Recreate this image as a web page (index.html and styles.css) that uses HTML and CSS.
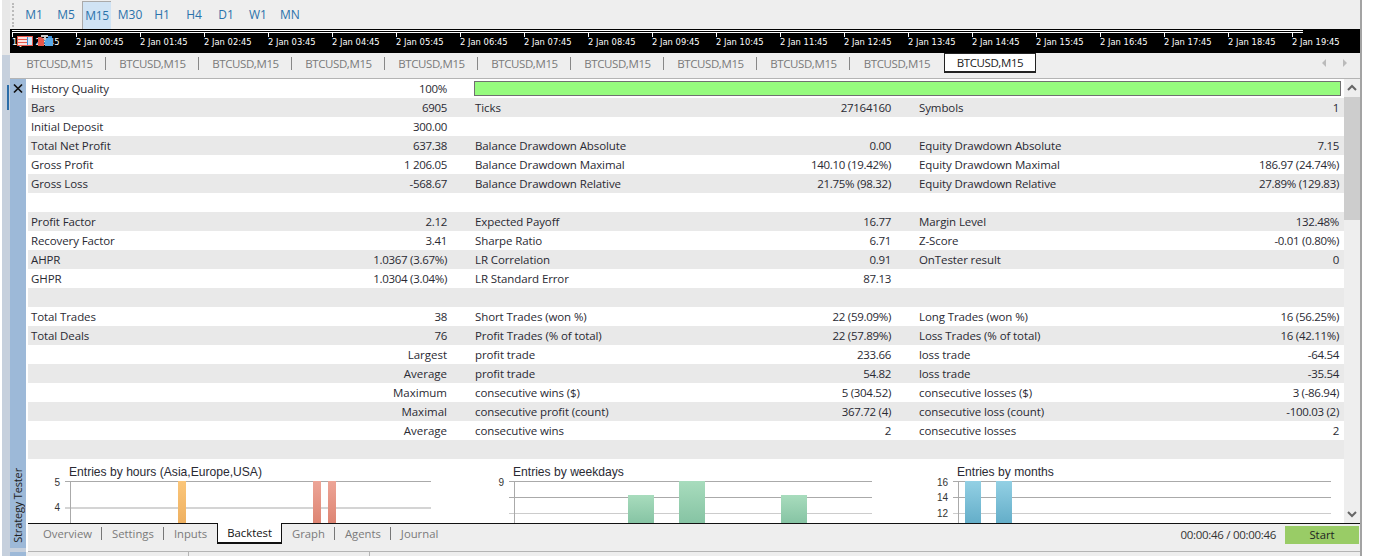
FILE: index.html
```html
<!DOCTYPE html>
<html lang="en">
<head>
    <meta charset="UTF-8">
    <title>Strategy Tester</title>
    <link rel="stylesheet" href="styles.css">
</head>
<body>
<div class="window">
    <div class="toolbar">
        <span class="grip"></span>
        <span class="period">M1</span>
        <span class="period">M5</span>
        <span class="period selected">M15</span>
        <span class="period">M30</span>
        <span class="period">H1</span>
        <span class="period">H4</span>
        <span class="period">D1</span>
        <span class="period">W1</span>
        <span class="period">MN</span>
    </div>

    <div class="time-scale">
        <div class="scale-lines"></div>
        <div class="scale-labels">
            <span class="first">1 Jan 23:45</span>
            <span>2 Jan 00:45</span><span>2 Jan 01:45</span><span>2 Jan 02:45</span><span>2 Jan 03:45</span>
            <span>2 Jan 04:45</span><span>2 Jan 05:45</span><span>2 Jan 06:45</span><span>2 Jan 07:45</span>
            <span>2 Jan 08:45</span><span>2 Jan 09:45</span><span>2 Jan 10:45</span><span>2 Jan 11:45</span>
            <span>2 Jan 12:45</span><span>2 Jan 13:45</span><span>2 Jan 14:45</span><span>2 Jan 15:45</span>
            <span>2 Jan 16:45</span><span>2 Jan 17:45</span><span>2 Jan 18:45</span><span>2 Jan 19:45</span>
        </div>
        <svg class="trade-icons" width="38" height="12" viewBox="0 0 38 12">
            <rect x="0.5" y="1.500" width="15" height="9" fill="#fff" stroke="#e8584c"/>
            <path d="M1 4.500h9M1 7.500h9" stroke="#e8584c" fill="none"/>
            <path d="M1 3h9M1 6h9M1 9h9" stroke="#f7c3bd" fill="none"/>
            <path d="M10.500 2v8" stroke="#3a8fd8"/>
            <path d="M11 2h4v8h-4z" fill="#cfe6f8"/>
            <path d="M0 1h10v1H0zM10 1h6v1h-6z" fill="#e8584c"/>
            <path d="M21 2l3 0 3 2v7h-6z" fill="#e8584c"/>
            <path d="M28 3h8v8h-8z" fill="#5aaae8"/>
            <path d="M31 1h4v2h-4z" fill="#3a8fd8"/>
            <path d="M24 0h7v2h-2v3h-2V2h-3z" fill="#c9c9c9"/>
        </svg>
    </div>

    <div class="doc-tabs">
        <span class="doc-tab">BTCUSD,M15</span>
        <span class="doc-tab">BTCUSD,M15</span>
        <span class="doc-tab">BTCUSD,M15</span>
        <span class="doc-tab">BTCUSD,M15</span>
        <span class="doc-tab">BTCUSD,M15</span>
        <span class="doc-tab">BTCUSD,M15</span>
        <span class="doc-tab">BTCUSD,M15</span>
        <span class="doc-tab">BTCUSD,M15</span>
        <span class="doc-tab">BTCUSD,M15</span>
        <span class="doc-tab last">BTCUSD,M15</span>
        <span class="doc-tab active">BTCUSD,M15</span>
        <span class="doc-arrows">
            <svg width="6" height="8" viewBox="0 0 6 8"><path d="M5 0v8L1 4z" fill="#bbb"/></svg>
            <svg width="6" height="8" viewBox="0 0 6 8"><path d="M1 0v8l4-4z" fill="#bbb"/></svg>
        </span>
    </div>

    <div class="tester">
        <div class="side">
            <svg class="close" width="16" height="19" viewBox="0 0 16 19"><path d="M4 5.500l8 8M12 5.500l-8 8" stroke="#111" stroke-width="1.700" fill="none"/></svg>
            <span class="side-title">Strategy Tester</span>
        </div>
        <div class="tester-main">
            <div class="report-area">
                <div class="report">
                    <div class="row"><div class="cell"><span>History Quality</span><span>100%</span></div><div class="bar-cell"><div class="quality-bar"></div></div></div>
                    <div class="row"><div class="cell"><span>Bars</span><span>6905</span></div><div class="cell"><span>Ticks</span><span>27164160</span></div><div class="cell"><span>Symbols</span><span>1</span></div></div>
                    <div class="row"><div class="cell"><span>Initial Deposit</span><span>300.00</span></div><div class="cell"></div><div class="cell"></div></div>
                    <div class="row"><div class="cell"><span>Total Net Profit</span><span>637.38</span></div><div class="cell"><span>Balance Drawdown Absolute</span><span>0.00</span></div><div class="cell"><span>Equity Drawdown Absolute</span><span>7.15</span></div></div>
                    <div class="row"><div class="cell"><span>Gross Profit</span><span>1 206.05</span></div><div class="cell"><span>Balance Drawdown Maximal</span><span>140.10 (19.42%)</span></div><div class="cell"><span>Equity Drawdown Maximal</span><span>186.97 (24.74%)</span></div></div>
                    <div class="row"><div class="cell"><span>Gross Loss</span><span>-568.67</span></div><div class="cell"><span>Balance Drawdown Relative</span><span>21.75% (98.32)</span></div><div class="cell"><span>Equity Drawdown Relative</span><span>27.89% (129.83)</span></div></div>
                    <div class="row"></div>
                    <div class="row"><div class="cell"><span>Profit Factor</span><span>2.12</span></div><div class="cell"><span>Expected Payoff</span><span>16.77</span></div><div class="cell"><span>Margin Level</span><span>132.48%</span></div></div>
                    <div class="row"><div class="cell"><span>Recovery Factor</span><span>3.41</span></div><div class="cell"><span>Sharpe Ratio</span><span>6.71</span></div><div class="cell"><span>Z-Score</span><span>-0.01 (0.80%)</span></div></div>
                    <div class="row"><div class="cell"><span>AHPR</span><span>1.0367 (3.67%)</span></div><div class="cell"><span>LR Correlation</span><span>0.91</span></div><div class="cell"><span>OnTester result</span><span>0</span></div></div>
                    <div class="row"><div class="cell"><span>GHPR</span><span>1.0304 (3.04%)</span></div><div class="cell"><span>LR Standard Error</span><span>87.13</span></div><div class="cell"></div></div>
                    <div class="row"></div>
                    <div class="row"><div class="cell"><span>Total Trades</span><span>38</span></div><div class="cell"><span>Short Trades (won %)</span><span>22 (59.09%)</span></div><div class="cell"><span>Long Trades (won %)</span><span>16 (56.25%)</span></div></div>
                    <div class="row"><div class="cell"><span>Total Deals</span><span>76</span></div><div class="cell"><span>Profit Trades (% of total)</span><span>22 (57.89%)</span></div><div class="cell"><span>Loss Trades (% of total)</span><span>16 (42.11%)</span></div></div>
                    <div class="row"><div class="cell"><span></span><span>Largest</span></div><div class="cell"><span>profit trade</span><span>233.66</span></div><div class="cell"><span>loss trade</span><span>-64.54</span></div></div>
                    <div class="row"><div class="cell"><span></span><span>Average</span></div><div class="cell"><span>profit trade</span><span>54.82</span></div><div class="cell"><span>loss trade</span><span>-35.54</span></div></div>
                    <div class="row"><div class="cell"><span></span><span>Maximum</span></div><div class="cell"><span>consecutive wins ($)</span><span>5 (304.52)</span></div><div class="cell"><span>consecutive losses ($)</span><span>3 (-86.94)</span></div></div>
                    <div class="row"><div class="cell"><span></span><span>Maximal</span></div><div class="cell"><span>consecutive profit (count)</span><span>367.72 (4)</span></div><div class="cell"><span>consecutive loss (count)</span><span>-100.03 (2)</span></div></div>
                    <div class="row"><div class="cell"><span></span><span>Average</span></div><div class="cell"><span>consecutive wins</span><span>2</span></div><div class="cell"><span>consecutive losses</span><span>2</span></div></div>
                    <div class="row"></div>

                    <div class="charts">
                        <div class="chart">
                            <div class="chart-title">Entries by hours (Asia,Europe,USA)</div>
                            <svg class="plot" width="444" height="46" viewBox="0 0 444 46">
                                <defs>
                                    <linearGradient id="orange" x1="0" y1="0" x2="0" y2="1"><stop offset="0" stop-color="#fbc67a"/><stop offset="1" stop-color="#eeb060"/></linearGradient>
                                    <linearGradient id="red" x1="0" y1="0" x2="0" y2="1"><stop offset="0" stop-color="#eda597"/><stop offset="1" stop-color="#dd8472"/></linearGradient>
                                    <linearGradient id="green" x1="0" y1="0" x2="0" y2="1"><stop offset="0" stop-color="#a8dcbd"/><stop offset="1" stop-color="#85c3a3"/></linearGradient>
                                    <linearGradient id="blue" x1="0" y1="0" x2="0" y2="1"><stop offset="0" stop-color="#93d0e4"/><stop offset="1" stop-color="#63adc8"/></linearGradient>
                                </defs>
                                <path d="M37 3.500h366" stroke="#aaa" fill="none"/>
                                <path d="M37 30h366" stroke="#d4d4d4" stroke-width="2" fill="none"/>
                                <path d="M42.500 3v43" stroke="#aaa" fill="none"/>
                                <rect x="150" y="3" width="8" height="43" fill="url(#orange)"/>
                                <rect x="285" y="3" width="8" height="43" fill="url(#red)"/>
                                <rect x="300" y="3" width="8" height="43" fill="url(#red)"/>
                                <text class="tick" x="32" y="8" text-anchor="end">5</text>
                                <text class="tick" x="32" y="33" text-anchor="end">4</text>
                            </svg>
                        </div>
                        <div class="chart">
                            <div class="chart-title">Entries by weekdays</div>
                            <svg class="plot" width="444" height="46" viewBox="0 0 444 46">
                                <path d="M37 3.500h363M37 19.500h363" stroke="#aaa" fill="none"/>
                                <path d="M37 35.500h363" stroke="#ccc" fill="none"/>
                                <path d="M42.500 3v43" stroke="#aaa" fill="none"/>
                                <rect x="156" y="17" width="26" height="29" fill="url(#green)"/>
                                <rect x="207" y="3" width="26" height="43" fill="url(#green)"/>
                                <rect x="309" y="17" width="26" height="29" fill="url(#green)"/>
                                <text class="tick" x="32" y="8" text-anchor="end">9</text>
                            </svg>
                        </div>
                        <div class="chart">
                            <div class="chart-title">Entries by months</div>
                            <svg class="plot" width="428" height="46" viewBox="0 0 428 46">
                                <path d="M37 3.500h378M37 19.500h378" stroke="#aaa" fill="none"/>
                                <path d="M37 35.500h378" stroke="#ccc" fill="none"/>
                                <path d="M42.500 3v43" stroke="#aaa" fill="none"/>
                                <rect x="49" y="3" width="16" height="43" fill="url(#blue)"/>
                                <rect x="80" y="3" width="16" height="43" fill="url(#blue)"/>
                                <text class="tick" x="32" y="8" text-anchor="end">16</text>
                                <text class="tick" x="32" y="23" text-anchor="end">14</text>
                                <text class="tick" x="32" y="39" text-anchor="end">12</text>
                            </svg>
                        </div>
                    </div>
                </div>
                <div class="scrollbar">
                    <svg class="scroll-btn" width="16" height="18" viewBox="0 0 16 18"><path d="M4 11l4-4 4 4" fill="none" stroke="#666" stroke-width="2"/></svg>
                    <div class="scroll-thumb"></div>
                    <div class="scroll-rest"></div>
                    <svg class="scroll-btn" width="16" height="18" viewBox="0 0 16 18"><path d="M4 7l4 4 4-4" fill="none" stroke="#666" stroke-width="2"/></svg>
                </div>
            </div>

            <div class="tabs">
                <span class="tab">Overview</span>
                <span class="tab">Settings</span>
                <span class="tab no-sep">Inputs</span>
                <span class="tab active">Backtest</span>
                <span class="tab">Graph</span>
                <span class="tab">Agents</span>
                <span class="tab no-sep">Journal</span>
                <span class="elapsed">00:00:46 / 00:00:46</span>
                <span class="start">Start</span>
            </div>
        </div>
    </div>

    <div class="stub">
        <span class="stub-side"></span>
        <span class="stub-col first"></span>
        <span class="stub-col"></span>
    </div>
</div>
</body>
</html>
```

FILE: styles.css
```css
html, body {
    margin: 0;
    padding: 0;
    height: 556px;
    overflow: hidden;
    background: #fff;
}

body {
    padding-left: 2px;
    font-family: 'Open Sans', 'Noto Sans', sans-serif;
    font-size: 11.5px;
    color: #2a2a33;
}

.window {
    box-sizing: border-box;
    width: 1360px;
    height: 556px;
    padding-left: 8px;
    background: linear-gradient(#e8e8e8 55px, #c6d0dd 55px);
    border-right: 2px solid #a3a3a3;
    display: flex;
    flex-direction: column;
}

/* period toolbar */
.toolbar {
    height: 29px;
    box-sizing: border-box;
    padding-top: 1px;
    background: #eee;
    display: flex;
    align-items: stretch;
}

.grip {
    width: 4px;
    margin: 2px 0 2px 2px;
    border-left: 2px dotted #bbb;
}

.period {
    width: 32px;
    text-align: center;
    line-height: 27px;
    font-size: 12px;
    color: #2b72ab;
}

.period.selected {
    box-sizing: border-box;
    background: #d0e3f4;
    border-left: 1px solid #aaa;
    border-top: 1px solid #aaa;
    width: 29px;
    margin-right: 3px;
    letter-spacing: -0.3px;
}

/* black time scale */
.time-scale {
    height: 24px;
    background: #000;
    position: relative;
    color: #fff;
    overflow: hidden;
}

.scale-lines {
    height: 1px;
    margin: 1px 57px 0 2px;
    border-top: 1px solid #fff;
    border-bottom: 1px solid #fff;
}

.scale-labels {
    display: flex;
    padding-left: 2px;
    font-family: 'DejaVu Sans', sans-serif;
    font-size: 8.4px;
    line-height: 11px;
}

.scale-labels span {
    width: 64px;
    flex: none;
    box-sizing: border-box;
    padding-top: 4px;
    background: linear-gradient(#fff, #fff) left top / 1px 4px no-repeat;
    white-space: nowrap;
}

.trade-icons {
    position: absolute;
    left: 7px;
    top: 6px;
}

/* chart tabs */
.doc-tabs {
    height: 26px;
    box-sizing: border-box;
    padding-left: 3px;
    background: #eee;
    border-bottom: 1px solid #b4b4b4;
    display: flex;
    align-items: flex-start;
    font-size: 11.5px;
    letter-spacing: -0.4px;
    color: #7a7a7a;
}

.doc-tab {
    box-sizing: border-box;
    width: 93px;
    height: 19px;
    line-height: 19px;
    margin-top: 1px;
    text-align: center;
    position: relative;
}

.doc-tab::after {
    content: "";
    position: absolute;
    right: 0;
    top: 3px;
    height: 13px;
    border-right: 1px solid #888;
}

.doc-tab.last {
    width: 94px;
}

.doc-tab.last::after {
    display: none;
}

.doc-tab.active {
    width: 92px;
    height: 20px;
    margin-top: 0;
    background: #fff;
    color: #222;
    border: 1px solid #222;
    border-bottom-width: 2px;
    line-height: 17px;
}

.doc-tab.active::after {
    display: none;
}

.doc-arrows {
    margin-left: auto;
    margin-right: 12px;
    display: flex;
    gap: 15px;
    padding-top: 6px;
}

/* tester panel */
.tester {
    flex: none;
    height: 473px;
    display: flex;
}

.side {
    width: 16px;
    background: #9db9d8;
    margin-bottom: 4px;
    display: flex;
    flex-direction: column;
    align-items: center;
    justify-content: space-between;
    position: relative;
}

.side::before {
    content: "";
    position: absolute;
    left: -3px;
    top: 6px;
    width: 2px;
    height: 25px;
    background: #2a6ca8;
}

.close {
    display: block;
}

.side-title {
    writing-mode: vertical-rl;
    transform: rotate(180deg);
    font-size: 11px;
    letter-spacing: -0.15px;
    line-height: 16px;
    padding-top: 5px;
    color: #222;
}

.tester-main {
    width: 1334px;
    padding-left: 2px;
    background: #fff;
    display: flex;
    flex-direction: column;
}

.report-area {
    height: 444px;
    display: flex;
    background: #fff;
    overflow: hidden;
}

.report {
    width: 1316px;
}

.row {
    height: 19px;
    display: grid;
    grid-template-columns: 444px 444px 428px;
    line-height: 19px;
}

.row:nth-child(even) {
    background: #e9e9e9;
}

.cell {
    display: flex;
    justify-content: space-between;
    padding: 0 25px 0 3px;
    white-space: nowrap;
}

.cell:nth-child(3) {
    padding-right: 5px;
}

.cell span:first-child {
    letter-spacing: -0.1px;
}

.cell span:last-child {
    letter-spacing: -0.3px;
}

.cell span:empty + span {
    letter-spacing: 0;
}

.bar-cell {
    grid-column: 2 / 4;
    padding: 2px 3px 2px 2px;
}

.quality-bar {
    height: 13px;
    background: #96fb7e;
    border: 1px solid #707070;
}

.charts {
    display: grid;
    grid-template-columns: 444px 444px 428px;
    height: 64px;
    overflow: hidden;
}

.chart-title {
    padding: 4px 0 0 41px;
    line-height: 18px;
    height: 15px;
    font-size: 12.1px;
    font-family: 'Liberation Sans', sans-serif;
}

.plot {
    display: block;
    overflow: visible;
}

.tick {
    font-family: 'Liberation Sans', sans-serif;
    font-size: 10px;
    fill: #333;
}

.scrollbar {
    width: 16px;
    background: #eee;
    display: flex;
    flex-direction: column;
}

.scroll-btn {
    flex: none;
}

.scroll-thumb {
    height: 123px;
    background: #cdcdcd;
}

.scroll-rest {
    flex: 1;
}

/* bottom tabs */
.tabs {
    height: 29px;
    box-sizing: border-box;
    background: #eee;
    border-top: 1px solid #111;
    border-bottom: 1px solid #b4b4b4;
    padding-left: 5px;
    display: flex;
    align-items: flex-start;
    font-size: 11.3px;
    color: #7a7a7a;
}

.tab {
    padding: 0 9px 0 10px;
    height: 13px;
    line-height: 13px;
    margin-top: 3px;
    border-right: 1px solid #777;
}

.tab.no-sep {
    border-right: none;
    padding-right: 10px;
}

.tab.active {
    background: #fff;
    color: #111;
    margin-top: -1px;
    padding: 0 9px;
    height: 19px;
    line-height: 20px;
    border: 1px solid #111;
    border-top: none;
    border-bottom-width: 2px;
}

.elapsed {
    margin-left: auto;
    margin-top: 3px;
    font-size: 11.5px;
    letter-spacing: -0.3px;
    color: #333;
}

.start {
    width: 74px;
    height: 18px;
    line-height: 18px;
    margin: 2px 1px 0 9px;
    text-align: center;
    background: #99cc66;
    color: #222;
}

.stub {
    flex: 1;
    display: flex;
    background: #eee;
}

.stub-side {
    width: 16px;
    background: #9db9d8;
}

.stub-col {
    width: 180px;
    border-right: 1px solid #b4b4b4;
}

.stub-col.first {
    width: 160px;
    margin-left: 2px;
}
```
